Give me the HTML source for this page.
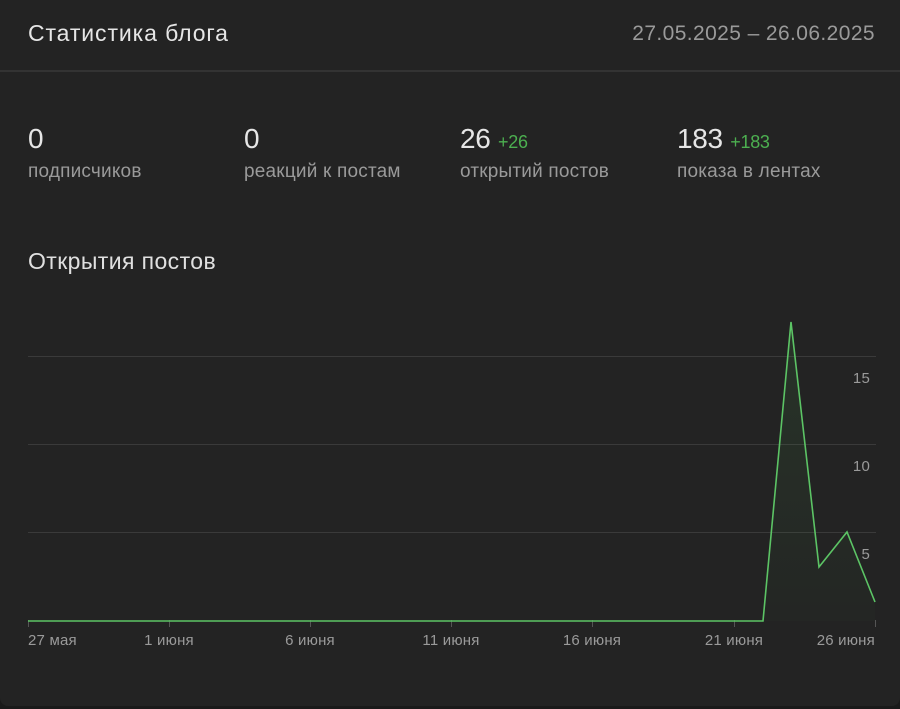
<!DOCTYPE html>
<html><head><meta charset="utf-8"><style>
html,body{margin:0;padding:0;background:#1a1a1a;}
body{width:900px;height:709px;overflow:hidden;font-family:"Liberation Sans","Noto Sans CJK SC",sans-serif;}
.card{position:absolute;left:0;top:0;width:900px;height:706px;background:#232323;border-radius:0 0 8px 8px;}
.t{position:absolute;white-space:nowrap;}
</style></head><body>
<div class="card">
<div class="t" style="left:28px;top:20px;font-size:23px;color:#e6e6e6;letter-spacing:0.9px">Статистика блога</div>
<div class="t" style="right:25px;top:22px;font-size:21px;color:#9a9a9a;letter-spacing:0.4px">27.05.2025 – 26.06.2025</div>
<div style="position:absolute;left:0;top:70px;width:900px;height:2px;background:#333"></div>

<div class="t" style="left:28px;top:123px;font-size:28px;color:#e6e6e6">0</div>
<div class="t" style="left:28px;top:161px;font-size:19px;color:#9a9a9a;letter-spacing:0.2px">подписчиков</div>
<div class="t" style="left:244px;top:123px;font-size:28px;color:#e6e6e6">0</div>
<div class="t" style="left:244px;top:161px;font-size:19px;color:#9a9a9a;letter-spacing:0.2px">реакций к постам</div>
<div class="t" style="left:460px;top:123px;font-size:28px;color:#e6e6e6;letter-spacing:-0.3px">26 <span style="font-size:18px;color:#4caf50">+26</span></div>
<div class="t" style="left:460px;top:161px;font-size:19px;color:#9a9a9a;letter-spacing:0.2px">открытий постов</div>
<div class="t" style="left:677px;top:123px;font-size:28px;color:#e6e6e6;letter-spacing:-0.3px">183 <span style="font-size:18px;color:#4caf50">+183</span></div>
<div class="t" style="left:677px;top:161px;font-size:19px;color:#9a9a9a;letter-spacing:0.2px">показа в лентах</div>

<div class="t" style="left:28px;top:248px;font-size:23px;color:#e0e0e0;letter-spacing:0.4px">Открытия постов</div>

<svg width="900" height="706" style="position:absolute;left:0;top:0" xmlns="http://www.w3.org/2000/svg">
<defs><linearGradient id="g" x1="0" y1="0" x2="0" y2="1"><stop offset="0" stop-color="#4caf50" stop-opacity="0.12"/><stop offset="1" stop-color="#4caf50" stop-opacity="0.02"/></linearGradient></defs>
<g stroke="#3a3a3a" stroke-width="1">
<line x1="28" y1="356.5" x2="876" y2="356.5"/>
<line x1="28" y1="444.5" x2="876" y2="444.5"/>
<line x1="28" y1="532.5" x2="876" y2="532.5"/>
</g>
<g stroke="#555" stroke-width="1">
<line x1="28.5" y1="620" x2="28.5" y2="627"/>
<line x1="169.5" y1="620" x2="169.5" y2="627"/>
<line x1="310.5" y1="620" x2="310.5" y2="627"/>
<line x1="451.5" y1="620" x2="451.5" y2="627"/>
<line x1="592.5" y1="620" x2="592.5" y2="627"/>
<line x1="734.5" y1="620" x2="734.5" y2="627"/>
<line x1="875.5" y1="620" x2="875.5" y2="627"/>
</g>
<path d="M28 621 L763 621 L791 322 L819 567 L847 532 L875 602 L875 621 Z" fill="url(#g)"/>
<polyline points="28,621 763,621 791,322 819,567 847,532 875,602" fill="none" stroke="#5cc465" stroke-width="1.6" stroke-linejoin="miter"/>
<g font-family="Liberation Sans, sans-serif" font-size="15" fill="#9a9a9a" letter-spacing="0.2">
<text x="870" y="383" text-anchor="end">15</text>
<text x="870" y="471" text-anchor="end">10</text>
<text x="870" y="559" text-anchor="end">5</text>
<text x="28" y="645">27 мая</text>
<text x="169" y="645" text-anchor="middle">1 июня</text>
<text x="310" y="645" text-anchor="middle">6 июня</text>
<text x="451" y="645" text-anchor="middle">11 июня</text>
<text x="592" y="645" text-anchor="middle">16 июня</text>
<text x="734" y="645" text-anchor="middle">21 июня</text>
<text x="875" y="645" text-anchor="end">26 июня</text>
</g>
</svg>
</div>
</body></html>
